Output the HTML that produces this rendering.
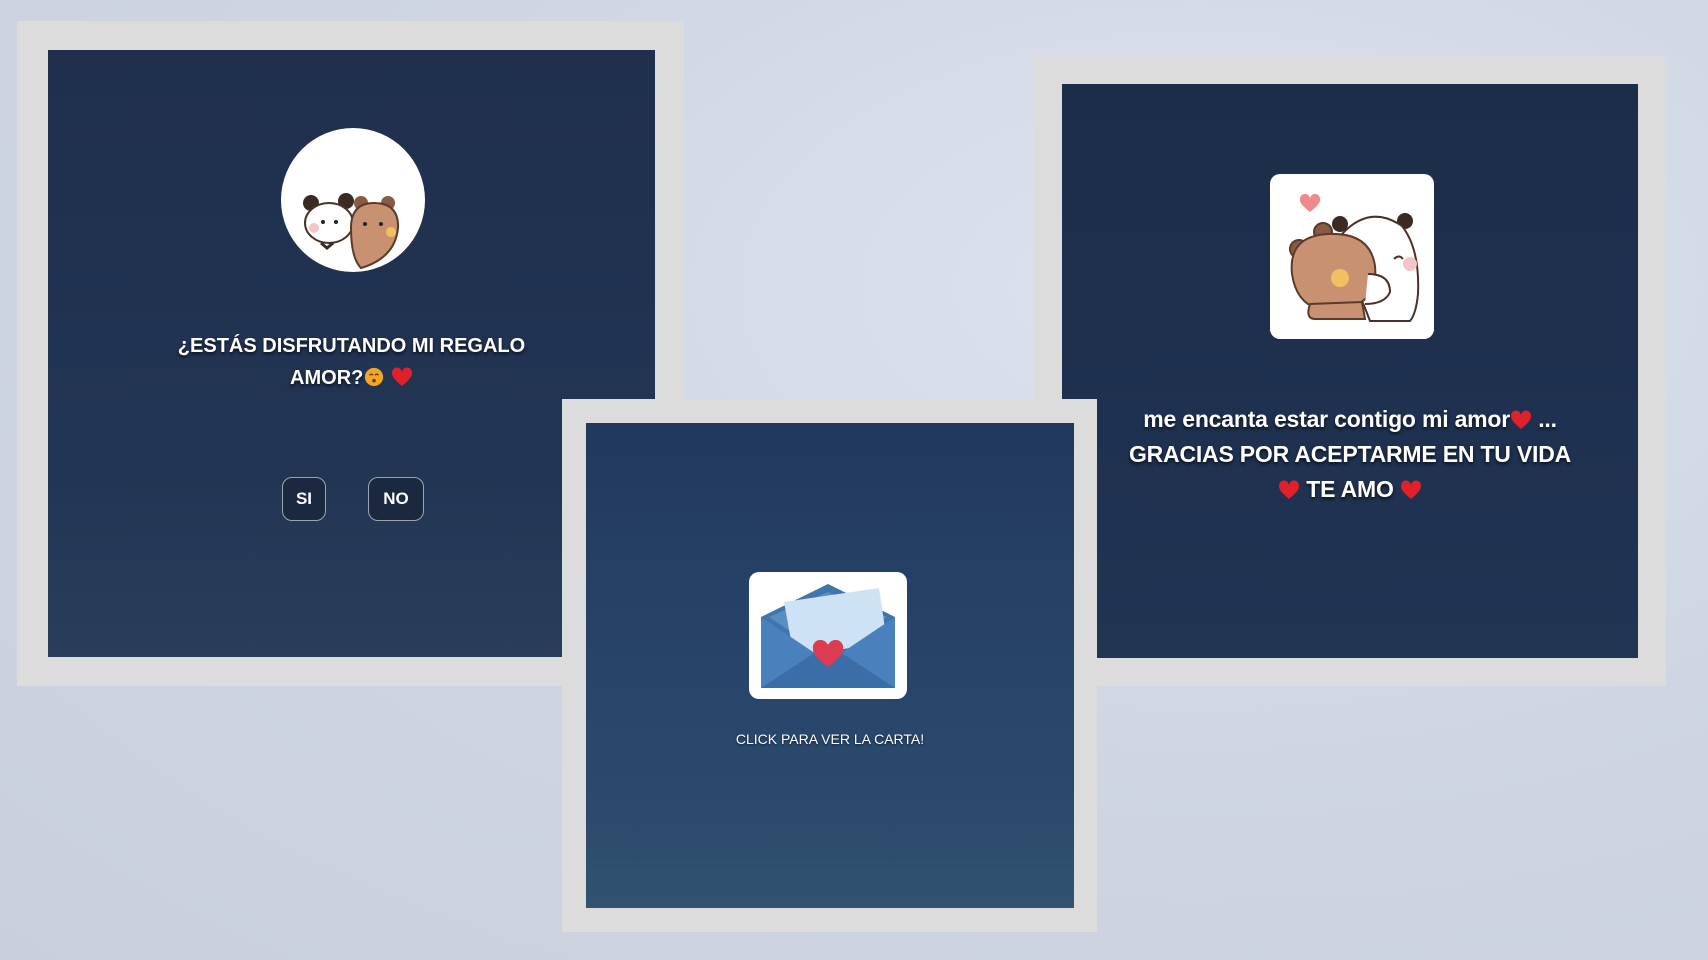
<!DOCTYPE html>
<html><head><meta charset="utf-8"><style>
*{margin:0;padding:0;box-sizing:border-box}
body{width:1708px;height:960px;overflow:hidden;position:relative;font-family:"Liberation Sans",sans-serif;
background:radial-gradient(ellipse at 70% 30%,#dde3ee 0%,#cfd6e2 50%,#c9d0dc 100%);}
.frame{position:absolute;background:#dcdcdc}
.panel{position:absolute;overflow:hidden}
.txt{position:absolute;color:#fff;font-weight:bold;text-align:center;text-shadow:0 2px 3px rgba(0,0,0,.7)}
.btn{position:absolute;border:1.5px solid #9aa4b2;border-radius:10px;background:#1b2940;color:#fff;font-weight:bold;font-size:17px;display:flex;align-items:center;justify-content:center}
.h{display:inline-block;width:22px;height:20px;vertical-align:-3px}
</style></head><body>
<!-- left -->
<div class="frame" style="left:17px;top:21px;width:667px;height:665px"></div>
<div class="panel" style="left:48px;top:50px;width:607px;height:607px;background:linear-gradient(#1f2f4d,#223554 70%,#2a3e5c)"></div>
<div style="position:absolute;left:281px;top:128px;width:144px;height:144px;border-radius:50%;background:#fff;overflow:hidden">
<svg width="144" height="144" viewBox="0 0 144 144">
<circle cx="30" cy="75" r="8" fill="#3a2a22"/><circle cx="65" cy="73" r="8" fill="#3a2a22"/>
<ellipse cx="48" cy="95" rx="24" ry="20" fill="#fff" stroke="#4a3228" stroke-width="2"/>
<circle cx="33" cy="100" r="5" fill="#f6c4c8"/>
<circle cx="42" cy="94" r="2" fill="#222"/><circle cx="55" cy="94" r="2" fill="#222"/>
<path d="M40 115 l6 5 l6 -5" stroke="#3a2a22" stroke-width="3" fill="none"/>
<circle cx="80" cy="75" r="7" fill="#8a5a44"/><circle cx="107" cy="75" r="7" fill="#8a5a44"/>
<path d="M70 100 Q70 75 93 75 Q118 75 117 100 Q114 130 80 140 Q70 130 70 100Z" fill="#c89272" stroke="#5a3a2a" stroke-width="2"/>
<circle cx="84" cy="96" r="2" fill="#222"/><circle cx="100" cy="96" r="2" fill="#222"/>
<circle cx="110" cy="104" r="5" fill="#f2c060"/>
</svg></div>
<div class="txt" style="left:48px;top:330px;width:607px;font-size:20px;line-height:32px">¿ESTÁS DISFRUTANDO MI REGALO<br>AMOR?<svg class="h" viewBox="0 0 22 22"><circle cx="11" cy="11" r="10" fill="#f5a623"/><path d="M6 9q2-2 4 0M12 9q2-2 4 0" stroke="#6b3a10" stroke-width="1.5" fill="none"/><circle cx="11" cy="15" r="2" fill="#6b3a10"/></svg> <svg class="h" viewBox="0 0 22 20"><path d="M11 19C4 13 1 10 1 6a5 5 0 0 1 10-1a5 5 0 0 1 10 1c0 4-3 7-10 13z" fill="#e0202a"/></svg></div>
<div class="btn" style="left:282px;top:477px;width:44px;height:44px">SI</div>
<div class="btn" style="left:368px;top:477px;width:56px;height:44px">NO</div>
<!-- right -->
<div class="frame" style="left:1034px;top:56px;width:632px;height:630px"></div>
<div class="panel" style="left:1062px;top:84px;width:576px;height:574px;background:linear-gradient(#1c2d49,#1f3150 60%,#213452)"></div>
<div style="position:absolute;left:1270px;top:174px;width:164px;height:165px;border-radius:10px;background:#fff;overflow:hidden">
<svg width="164" height="165" viewBox="0 0 164 165">
<path d="M40 38c-6-5-10-8-10-12a4 4 0 0 1 10-2a4 4 0 0 1 10 2c0 4-4 7-10 12z" fill="#f08a8a"/>
<circle cx="70" cy="50" r="8" fill="#3a2a22"/><circle cx="135" cy="47" r="8" fill="#3a2a22"/>
<path d="M72 60Q100 30 132 52Q150 75 148 120Q146 140 140 147L100 147Q90 120 75 90Z" fill="#fff" stroke="#4a3228" stroke-width="2"/>
<circle cx="140" cy="90" r="7" fill="#f6c4c8"/>
<path d="M124 85q5-5 9 0" stroke="#4a3228" stroke-width="2" fill="none"/>
<circle cx="29" cy="75" r="9" fill="#8a5a44" stroke="#5a3a2a" stroke-width="2"/><circle cx="53" cy="58" r="9" fill="#8a5a44" stroke="#5a3a2a" stroke-width="2"/>
<path d="M22 100Q18 62 58 60Q100 58 105 92Q108 122 84 132L48 135Q26 128 22 100Z" fill="#c89272" stroke="#5a3a2a" stroke-width="2"/>
<circle cx="70" cy="104" r="9" fill="#f2c060"/>
<path d="M40 130Q35 145 45 145L95 145L92 128Z" fill="#c89272" stroke="#5a3a2a" stroke-width="2"/>
<path d="M98 100Q120 100 120 118Q115 130 95 130" stroke="#4a3228" stroke-width="2" fill="#fff"/>
</svg></div>
<div class="txt" style="left:1062px;top:402px;width:576px;font-size:23px;line-height:35px;letter-spacing:-0.2px">me encanta estar contigo mi amor<svg class="h" viewBox="0 0 22 20"><path d="M11 19C4 13 1 10 1 6a5 5 0 0 1 10-1a5 5 0 0 1 10 1c0 4-3 7-10 13z" fill="#e0202a"/></svg> ...<br>GRACIAS POR ACEPTARME EN TU VIDA<br><svg class="h" viewBox="0 0 22 20"><path d="M11 19C4 13 1 10 1 6a5 5 0 0 1 10-1a5 5 0 0 1 10 1c0 4-3 7-10 13z" fill="#e0202a"/></svg> TE AMO <svg class="h" viewBox="0 0 22 20"><path d="M11 19C4 13 1 10 1 6a5 5 0 0 1 10-1a5 5 0 0 1 10 1c0 4-3 7-10 13z" fill="#e0202a"/></svg></div>
<!-- middle -->
<div class="frame" style="left:562px;top:399px;width:535px;height:533px"></div>
<div class="panel" style="left:586px;top:423px;width:488px;height:485px;background:linear-gradient(#22385d,#27446b 50%,#2c4a6c 80%,#31536f)"></div>
<div style="position:absolute;left:749px;top:572px;width:158px;height:127px;border-radius:10px;background:#fff;overflow:hidden">
<svg width="158" height="127" viewBox="0 0 158 127">
<path d="M12 45L79 12L146 45L146 116L12 116Z" fill="#3f74ad"/>
<path d="M20 45L79 20L138 45L79 85Z" fill="#5a8dc4"/>
<path d="M35 30L130 16L138 70L45 85Z" fill="#cde3f5"/>
<path d="M12 45L79 90L146 45L146 116L12 116Z" fill="#4a80bb"/>
<path d="M12 116L79 72L146 116Z" fill="#3b6ea7"/>
<path d="M79 95c-10-8-15-12-15-18a7 7 0 0 1 15-3a7 7 0 0 1 15 3c0 6-5 10-15 18z" fill="#dc3b52"/>
</svg></div>
<div class="txt" style="left:586px;top:731px;width:488px;font-size:14px;font-weight:normal;text-shadow:0 1px 2px rgba(0,0,0,.6)">CLICK PARA VER LA CARTA!</div>
</body></html>
